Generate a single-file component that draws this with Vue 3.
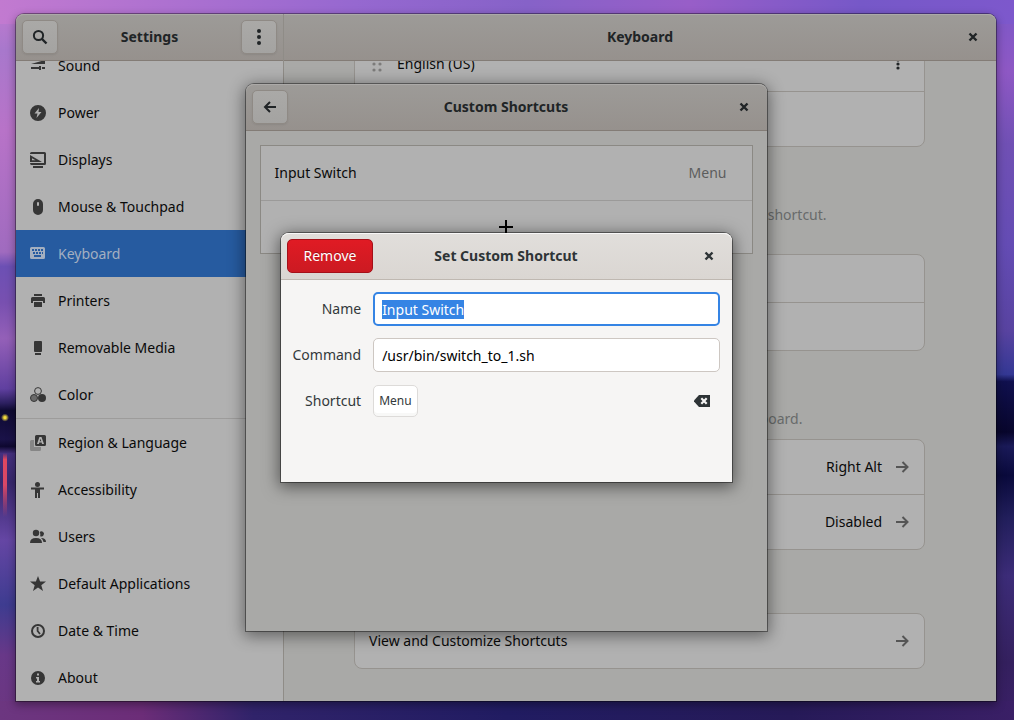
<script setup>
import { ref, onMounted } from 'vue'

const categories = [
  { icon: 'sound', label: 'Sound' },
  { icon: 'power', label: 'Power' },
  { icon: 'displays', label: 'Displays' },
  { icon: 'mouse', label: 'Mouse & Touchpad' },
  { icon: 'keyboard', label: 'Keyboard', selected: true },
  { icon: 'printers', label: 'Printers' },
  { icon: 'media', label: 'Removable Media' },
  { icon: 'color', label: 'Color' },
  { icon: 'region', label: 'Region & Language', separated: true },
  { icon: 'accessibility', label: 'Accessibility' },
  { icon: 'users', label: 'Users' },
  { icon: 'star', label: 'Default Applications' },
  { icon: 'clock', label: 'Date & Time' },
  { icon: 'about', label: 'About' },
]

const name = ref('Input Switch')
const command = ref('/usr/bin/switch_to_1.sh')
const nameField = ref(null)

onMounted(() => {
  nameField.value.focus()
  nameField.value.select()
})
</script>

<template>
  <div class="desktop">
    <div class="window settings">
      <div class="pane side">
        <header class="bar">
          <button class="tool" aria-label="Search">
            <svg width="16" height="16" viewBox="0 0 16 16"><circle cx="6.5" cy="6.5" r="4.6" fill="none" stroke="currentColor" stroke-width="2" /><path d="M10 10l4.5 4.5" stroke="currentColor" stroke-width="2.4" /></svg>
          </button>
          <h1>Settings</h1>
          <button class="tool" aria-label="Menu">
            <svg width="16" height="16" viewBox="0 0 16 16" fill="currentColor"><circle cx="8" cy="2" r="2" /><circle cx="8" cy="8" r="2" /><circle cx="8" cy="14" r="2" /></svg>
          </button>
        </header>
        <nav class="scroll">
          <a
            v-for="item in categories"
            :key="item.icon"
            href="#"
            class="category"
            :class="{ selected: item.selected, separated: item.separated }"
          >
            <svg width="16" height="16" viewBox="0 0 16 16" fill="currentColor" aria-hidden="true">
              <template v-if="item.icon === 'sound'">
                <path d="M1 6L15 2v4zM1 9h8V8h2v4H9v-1H1zM12 9h1v2h-1zM13 9h2v2h-2z" />
              </template>
              <template v-else-if="item.icon === 'power'">
                <path fill-rule="evenodd" d="M8 0a8 8 0 100 16A8 8 0 008 0zM9 3L4.500 8.500H7.500L6.500 13l5-6H8.500z" />
              </template>
              <template v-else-if="item.icon === 'displays'">
                <path d="M0 1.500Q0 0 1.500 0h13Q16 0 16 1.500v10Q16 13 14.500 13H1.500Q0 13 0 11h14V2H0zM3 14h10v2H3z" />
                <path fill-rule="evenodd" d="M0 3l12 7H0zM2 6.200V8.200h3.500z" />
              </template>
              <template v-else-if="item.icon === 'mouse'">
                <path fill-rule="evenodd" d="M8 0a5 5 0 00-5 5v6a5 5 0 0010 0V5a5 5 0 00-5-5zM8 3a1 1 0 011 1v2a1 1 0 01-2 0V4a1 1 0 011-1z" />
              </template>
              <template v-else-if="item.icon === 'keyboard'">
                <path fill-rule="evenodd" d="M1.500 1h12Q15 1 15 2.500v9q0 1.500-1.500 1.500h-12Q0 13 0 11.500v-9Q0 1 1.500 1zM2 3v2h2V3zM5 3v2h2V3zM8 3v2h2V3zM11 3v2h2V3zM3 6v2h2V6zM6 6v2h2V6zM9 6v2h2V6zM12 6v2h1V6zM4 9v2h7V9z" />
              </template>
              <template v-else-if="item.icon === 'printers'">
                <path d="M4 1h8v2H4zM2.500 4h11Q15 4 15 5.500V10h-2V8H3v2H1V5.500Q1 4 2.500 4zM4 9h8v5H4z" />
              </template>
              <template v-else-if="item.icon === 'media'">
                <path d="M5 1h6q1 0 1 1v9q0 1-1 1H5q-1 0-1-1V2q0-1 1-1zM5 13h6v2H5z" />
              </template>
              <template v-else-if="item.icon === 'color'">
                <circle cx="8" cy="4" r="3.400" fill="none" stroke="currentColor" />
                <circle cx="4" cy="11" r="3.500" fill="#6a6a6a" stroke="currentColor" />
                <circle cx="12" cy="11" r="4" />
              </template>
              <template v-else-if="item.icon === 'region'">
                <path opacity="0.35" d="M1.500 5H4v7h7v2.500q0 1.500-1.500 1.500h-8Q0 16 0 14.500v-8Q0 5 1.500 5z" />
                <path fill-rule="evenodd" d="M6.500 0h8Q16 0 16 1.500v8q0 1.500-1.500 1.500h-8Q5 11 5 9.500v-8Q5 0 6.500 0zM9.400 2L7 9h1.900l.4-1.400h2.400L12 9h2l-2.500-7zM10.500 3.800l.8 2.500H9.700z" />
              </template>
              <template v-else-if="item.icon === 'accessibility'">
                <circle cx="7.500" cy="2.500" r="2.500" />
                <path d="M1 5.500h13v2h-4V16H8v-5H7v5H5V7.500H1z" />
              </template>
              <template v-else-if="item.icon === 'users'">
                <circle cx="6" cy="4" r="3.200" />
                <path d="M0 14q0-5 6-5t6 5zM9.700 2.900a2.600 2.600 0 11.500 4.300Q10.800 5 9.700 2.900zM11 9q5 0 5 4h-2.500Q13 10.500 11 9z" />
              </template>
              <template v-else-if="item.icon === 'star'">
                <path d="M8 0l2.100 5.400 5.900.2-4.700 3.600L13 15l-5-3.400L3 15l1.700-5.800L0 5.600l5.900-.2z" />
              </template>
              <template v-else-if="item.icon === 'clock'">
                <circle cx="8" cy="8" r="6" fill="none" stroke="currentColor" stroke-width="2" />
                <path d="M7.600 4v4l2.400 3" fill="none" stroke="currentColor" stroke-width="1.800" />
              </template>
              <template v-else>
                <path fill-rule="evenodd" d="M8 1a7 7 0 100 14A7 7 0 008 1zM7 3.500h2v2H7zM6 7h3v4h1v1.500H6V11h1V8.500H6z" />
              </template>
            </svg>
            {{ item.label }}
          </a>
        </nav>
      </div>

      <div class="pane main">
        <header class="bar">
          <h1>Keyboard</h1>
          <button class="close" aria-label="Close">
            <svg width="10" height="10" viewBox="0 0 10 10"><path d="M1.500 1.500l7 7M8.500 1.500l-7 7" stroke="currentColor" stroke-width="2.400" /></svg>
          </button>
        </header>
        <main class="scroll content">
          <div class="card">
            <div class="row source">
              <svg class="grip" width="10" height="16" viewBox="0 0 10 16" fill="currentColor"><circle cx="2" cy="2" r="1.600" /><circle cx="8" cy="2" r="1.600" /><circle cx="2" cy="8" r="1.600" /><circle cx="8" cy="8" r="1.600" /><circle cx="2" cy="14" r="1.600" /><circle cx="8" cy="14" r="1.600" /></svg>
              <span>English (US)</span>
              <button class="more" aria-label="Source options">
                <svg width="4" height="12" viewBox="0 0 4 12" fill="currentColor"><circle cx="2" cy="2" r="1.600" /><circle cx="2" cy="6" r="1.600" /><circle cx="2" cy="10" r="1.600" /></svg>
              </button>
            </div>
            <div class="row"></div>
          </div>
          <p class="note">Input sources can be switched with the Super+Space keyboard shortcut.<br>This can be changed in the shortcut settings.</p>
          <div class="card">
            <div class="row short"></div>
            <div class="row short"></div>
          </div>
          <p class="note">Methods for entering symbols and letter variants with the keyboard.</p>
          <div class="card">
            <a v-for="value in ['Right Alt', 'Disabled']" :key="value" href="#" class="row link">
              <span class="value">{{ value }}</span>
              <svg width="14" height="14" viewBox="0 0 14 14"><path d="M1 7h11M7.500 2l5 5-5 5" fill="none" stroke="currentColor" stroke-width="2" /></svg>
            </a>
          </div>
          <div class="card spaced">
            <a href="#" class="row link">
              <span>View and Customize Shortcuts</span>
              <svg width="14" height="14" viewBox="0 0 14 14"><path d="M1 7h11M7.500 2l5 5-5 5" fill="none" stroke="currentColor" stroke-width="2" /></svg>
            </a>
          </div>
        </main>
      </div>

      <div class="layer">
        <section class="window shortcuts" aria-label="Custom Shortcuts">
          <header class="bar">
            <button class="tool" aria-label="Back">
              <svg width="14" height="14" viewBox="0 0 14 14"><path d="M13 7H2M7 2L2 7l5 5" fill="none" stroke="currentColor" stroke-width="2" /></svg>
            </button>
            <h1>Custom Shortcuts</h1>
            <button class="close" aria-label="Close">
              <svg width="10" height="10" viewBox="0 0 10 10"><path d="M1.500 1.500l7 7M8.500 1.500l-7 7" stroke="currentColor" stroke-width="2.400" /></svg>
            </button>
          </header>
          <div class="list">
            <div class="entry"><span>Input Switch</span><span class="accel">Menu</span></div>
            <button class="add" aria-label="Add shortcut">
              <svg width="14" height="14" viewBox="0 0 14 14" fill="currentColor"><path d="M6 0h2v6h6v2H8v6H6V8H0V6h6z" /></svg>
            </button>
          </div>
        </section>
      </div>

      <div class="layer">
        <form class="window editor" aria-label="Set Custom Shortcut" @submit.prevent>
          <header class="bar">
            <button type="button" class="remove">Remove</button>
            <h1>Set Custom Shortcut</h1>
            <button type="button" class="close" aria-label="Close">
              <svg width="10" height="10" viewBox="0 0 10 10"><path d="M1.500 1.500l7 7M8.500 1.500l-7 7" stroke="currentColor" stroke-width="2.400" /></svg>
            </button>
          </header>
          <div class="fields">
            <label for="name">Name</label>
            <input id="name" ref="nameField" v-model="name" type="text">
            <label for="command">Command</label>
            <input id="command" v-model="command" type="text" spellcheck="false">
            <span class="caption">Shortcut</span>
            <div class="keys">
              <kbd>Menu</kbd>
              <button type="button" class="clear" aria-label="Reset shortcut">
                <svg width="16" height="12" viewBox="0 0 16 12"><path fill="currentColor" d="M5 0h11v12H5L0 6.500v-1z" /><path d="M7.300 3.300l5.400 5.400M12.700 3.300L7.300 8.700" stroke="#f6f5f4" stroke-width="2.200" /></svg>
              </button>
            </div>
          </div>
        </form>
      </div>
    </div>
  </div>
</template>

<style>
body {
  margin: 0;
  overflow: hidden;
}
</style>

<style scoped>
* {
  box-sizing: border-box;
}

.desktop {
  display: flex;
  height: 100vh;
  padding: 14px 18px 19px 16px;
  font: 14px/20px "Noto Sans", "Open Sans", sans-serif;
  color: #0a0a0a;
  background:
    radial-gradient(circle at 5px 58%, #f4dc3c 1px, transparent 4px),
    linear-gradient(rgba(224, 72, 96, 0), #e04860 10%, #d84868 50%, rgba(160, 64, 128, 0)) 3px 69% / 4px 64px no-repeat,
    linear-gradient(90deg, #c27ad0, #a96fd0 20%, #9668d0 35%, #8662c8 52%, #985ec8 68%, #7658c8 85%, #7d58cc) top / 100% 24px no-repeat,
    linear-gradient(90deg, #6c3680, #6c2d78 14%, #30236a 25%, #211c62 50%, #261a58 78%, #3a1f66) bottom / 100% 19px no-repeat,
    linear-gradient(#c27ad0, #a878cc 7%, #b873c8 18%, #a06bbf 35%, #6c50b4 37%, #7850b0 42%, #9460b8 47%, #6040a0 54%, #2c2060 56%, #0e0a32 57%, #1a1248 61%, #0e0830 62%, #453080 63%, #38286e 67%, #6546a4 75%, #3e3c90 84%, #683888 91%, #6c3680) left / 16px 100% no-repeat,
    linear-gradient(#7b58c8, #8e58c4 10%, #7050b4 20%, #644cb4 34%, #5843a0 46%, #343894 52%, #10104e 53%, #08062c 60%, #1a1a58 62%, #0a0a3c 66%, #221f5c 72%, #3c2c78 80%, #34205e 92%, #3a1f66) right / 18px 100% no-repeat,
    #2b2060;
}

.window {
  border-radius: 8px 8px 0 0;
  background: #a9a9a7;
}

.settings {
  position: relative;
  display: flex;
  flex: 1;
  min-width: 0;
  box-shadow: 0 0 0 1px rgba(0, 0, 0, 0.36), 0 3px 9px 1px rgba(0, 0, 0, 0.35);
}

.pane {
  display: flex;
  flex-direction: column;
  min-width: 0;
  min-height: 0;
}

.side {
  flex: 0 0 268px;
  border-right: 1px solid #8f8c87;
  border-top-left-radius: 8px;
}

.main {
  flex: 1;
}

.bar {
  position: relative;
  display: flex;
  flex: none;
  align-items: center;
  justify-content: space-between;
  height: 47px;
  padding: 0 6px;
  border-bottom: 1px solid #837c76;
  background: linear-gradient(#9d9b98, #96918d);
  box-shadow: inset 0 1px #acaaa8;
  color: #202426;
}

.side .bar,
.shortcuts .bar,
.editor .bar {
  border-top-left-radius: 8px;
}

.main .bar,
.shortcuts .bar,
.editor .bar {
  border-top-right-radius: 8px;
}

h1 {
  position: absolute;
  inset: 0;
  margin: auto;
  width: fit-content;
  height: 20px;
  font-size: 14px;
  font-weight: 700;
  line-height: 20px;
}

button {
  display: flex;
  align-items: center;
  justify-content: center;
  padding: 0;
  border: 0;
  background: none;
  color: inherit;
  font: inherit;
}

.tool {
  width: 36px;
  height: 34px;
  border: 1px solid #8f8a85;
  border-radius: 5px;
  background: linear-gradient(#aaa9a7, #a4a3a1);
  box-shadow: 0 1px 2px rgba(0, 0, 0, 0.08);
}

.close {
  width: 34px;
  height: 34px;
  margin-left: auto;
}

.scroll {
  display: flex;
  flex: 1;
  flex-direction: column;
  justify-content: flex-end;
  min-height: 0;
  overflow: hidden;
}

nav {
  background: #b1b1b1;
}

.category {
  display: flex;
  flex: none;
  align-items: center;
  gap: 12px;
  height: 47px;
  padding: 0 14px;
  color: #0a0a0a;
  text-decoration: none;
}

.category svg {
  color: #363636;
}

.category.separated {
  height: 48px;
  border-top: 1px solid #9d9c9b;
}

.category.selected,
.category.selected svg {
  background: #265ba0;
  color: #a3afc0;
}

.content {
  padding: 0 71px 32px 70px;
}

.card {
  flex: none;
  border: 1px solid #96938f;
  border-radius: 8px;
  background: #b1b1b1;
}

.spaced {
  margin-top: 63px;
}

.row {
  display: flex;
  align-items: center;
  height: 54px;
  padding: 0 14px;
  color: #0a0a0a;
  text-decoration: none;
}

.row + .row {
  height: 55px;
  border-top: 1px solid #96938f;
}

.row.short {
  height: 47px;
}

.row.short + .short {
  height: 48px;
}

.source {
  padding: 0 17px;
}

.grip {
  margin-right: 15px;
  color: #7c7b7a;
}

.more {
  width: 18px;
  height: 24px;
  margin-left: auto;
  color: #202426;
}

.link {
  justify-content: space-between;
}

.link svg {
  margin: 0 1px 0 13px;
  color: #555;
}

.value {
  margin-left: auto;
}

.note {
  flex: none;
  margin: 58px 0 11px;
  line-height: 19px;
  color: #686b6b;
  white-space: nowrap;
}

.layer {
  position: absolute;
  inset: 0;
  display: grid;
  place-items: center;
}

.shortcuts {
  width: 521px;
  max-width: 100%;
  height: calc(100% - 140px);
  box-shadow: 0 0 0 1px rgba(0, 0, 0, 0.4), 0 3px 16px 2px rgba(0, 0, 0, 0.45);
}

.list {
  margin: 14px;
  border: 1px solid #8b8984;
  background: #b1b1b1;
}

.entry {
  display: flex;
  align-items: center;
  justify-content: space-between;
  height: 55px;
  padding: 0 25px 0 14px;
  border-bottom: 1px solid #9b9a99;
}

.accel {
  color: #5c5d5d;
}

.add {
  width: 100%;
  height: 52px;
  color: #000;
}

.editor {
  width: 451px;
  max-width: 100%;
  min-height: 249px;
  background: #f6f5f4;
  box-shadow: 0 0 0 1px rgba(0, 0, 0, 0.42), 0 3px 16px 2px rgba(0, 0, 0, 0.5);
  color: #33393b;
}

.editor .bar {
  border-bottom-color: #bfb8b1;
  background: linear-gradient(#e1dedb, #dad6d2);
  box-shadow: inset 0 1px #f8f7f7;
  color: #2e3436;
}

.remove {
  height: 34px;
  padding: 0 16px;
  border: 1px solid #a41019;
  border-radius: 5px;
  background: linear-gradient(#e01b24, #cc1a22);
  color: #fff;
  text-shadow: 0 -1px rgba(0, 0, 0, 0.3);
}

.fields {
  display: grid;
  grid-template-columns: auto 1fr;
  grid-auto-rows: 34px;
  align-items: center;
  gap: 12px;
  padding: 12px;
}

label,
.caption {
  text-align: right;
}

input {
  width: 100%;
  height: 34px;
  padding: 0 8px;
  border: 1px solid #cdc7c2;
  border-radius: 5px;
  background: #fff;
  color: #000;
  font: inherit;
}

input:focus {
  padding: 0 7px;
  border: 2px solid #3584e4;
  outline: none;
}

input::selection {
  background: #3584e4;
  color: #fff;
}

.keys {
  display: flex;
  align-items: center;
  justify-content: space-between;
}

kbd {
  padding: 5px;
  border: 1px solid #dddbd9;
  border-radius: 5px;
  background: #fff;
  box-shadow: inset 0 -3px #f8f8f7;
  color: #33393b;
  font: 12px/20px "Noto Sans", "Open Sans", sans-serif;
}

.clear {
  width: 36px;
  height: 34px;
  color: #2e3436;
}
</style>
